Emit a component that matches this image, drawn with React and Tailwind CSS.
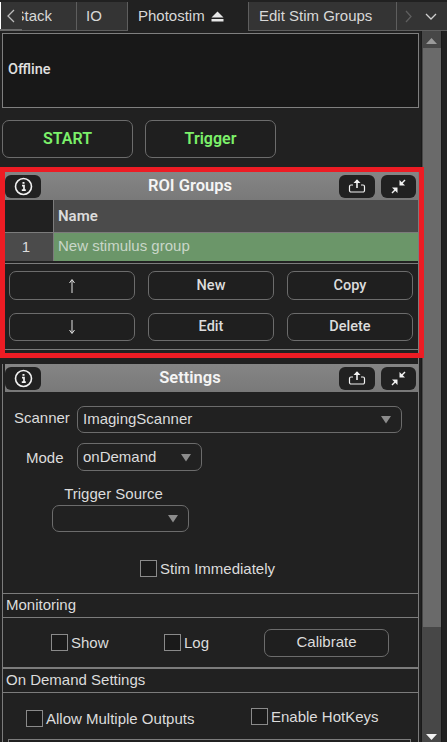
import { useState } from "react";

const sans = "font-['Liberation_Sans',Arial,sans-serif]";
const din = "font-['Roboto',sans-serif] font-medium";
const dinBold = "font-['Roboto',sans-serif] font-semibold";

const PanelHeader = ({ title }) => (
  <div className="flex h-[28px] items-center justify-between bg-gradient-to-b from-[#858585] to-[#797979] pr-[2px]">
    <button className="flex h-[23px] w-[36px] items-center justify-center rounded-[6px] bg-[#212121]">
      <svg width="19" height="19" viewBox="0 0 19 19" fill="none" stroke="#f2f2f2" strokeWidth="1.6">
        <circle cx="9.5" cy="9.5" r="8" />
        <path d="M8 8.6h2v4.6M7.8 13.2h4" strokeWidth="1.7" />
        <path d="M9.5 5v1.8" strokeWidth="2" />
      </svg>
    </button>
    <div className={`${dinBold} flex-1 text-center text-[16.5px] text-[#f5f5f5]`}>{title}</div>
    <div className="flex gap-[6px]">
      <button className="flex h-[23px] w-[36px] items-center justify-center rounded-[6px] bg-[#212121]">
        <svg width="18" height="16" viewBox="0 0 18 16" fill="none" stroke="#f2f2f2" strokeWidth="1.2">
          <path d="M5 7H3a1.5 1.5 0 0 0-1.5 1.5v4A1.5 1.5 0 0 0 3 14h12a1.5 1.5 0 0 0 1.5-1.5v-4A1.5 1.5 0 0 0 15 7h-2" />
          <path d="M9 10V2" strokeWidth="1.6" />
          <path d="M5.5 5L9 1.2 12.500 5z" fill="#f2f2f2" stroke="none" />
        </svg>
      </button>
      <button className="flex h-[23px] w-[35px] items-center justify-center rounded-[6px] bg-[#212121]">
        <svg width="15" height="15" viewBox="0 0 15 15" fill="#f2f2f2" stroke="#f2f2f2">
          <path d="M1 14l4-4" strokeWidth="1.5" />
          <path d="M1 8.500h5.500V14z" stroke="none" />
          <path d="M14 1l-4 4" strokeWidth="1.500" />
          <path d="M8.500 1v5.500H14z" stroke="none" />
        </svg>
      </button>
    </div>
  </div>
);

const Btn = ({ children, className = "" }) => (
  <button className={`flex items-center justify-center rounded-[7px] border border-[#6c6c6c] bg-[#1f1f1f] ${className}`}>
    {children}
  </button>
);

const ActionBtn = ({ children, className = "" }) => (
  <Btn className={`${din} text-[14.5px] text-[#dcdcdc] ${className}`}>{children}</Btn>
);

const GreenBtn = ({ children }) => (
  <Btn className={`${dinBold} h-[38px] w-[131px] text-[16px] text-[#7cf06a]`}>{children}</Btn>
);

const Arrow = ({ up }) => (
  <svg width="8" height="16" viewBox="0 0 8 16" fill="none" stroke="#e4e4e4" strokeWidth="1">
    {up ? <path d="M4 15V2M1.500 5L4 1.500 6.500 5" /> : <path d="M4 1v13M1.500 11L4 14.500 6.500 11" />}
  </svg>
);

const Select = ({ value, className = "" }) => (
  <div className={`flex items-center justify-between rounded-[7px] border border-[#6c6c6c] pl-[5px] pr-[9px] text-[15px] text-[#dcdcdc] ${className}`}>
    <span>{value}</span>
    <svg width="12" height="9" viewBox="0 0 12 9" fill="#8c8c8c">
      <path d="M1 1h10L6 8.500z" />
    </svg>
  </div>
);

const Check = ({ label, className = "" }) => {
  const [on, setOn] = useState(false);
  return (
    <label className={`flex items-center gap-[3px] text-[15px] leading-[17px] text-[#dcdcdc] ${className}`}>
      <input
        type="checkbox"
        checked={on}
        onChange={() => setOn(!on)}
        className="h-[17px] w-[17px] appearance-none border border-[#8a8a8a] bg-[#1a1a1a]"
      />
      {label}
    </label>
  );
};

const SectionTitle = ({ children }) => (
  <div className="flex h-[24px] items-center border-b border-[#7c7c7c] pl-[3px] text-[15px] text-[#dcdcdc]">
    {children}
  </div>
);

export default function App() {
  return (
    <div className={`${sans} relative flex h-[742px] w-[447px] flex-col overflow-hidden bg-[#212121]`}>
      {/* tabs */}
      <div className="relative flex h-[31px] shrink-0 border-t-2 border-[#212121] bg-[#343434] text-[15px] text-[#d8d8d8]">
        <div className="flex w-[77px] items-center border-b border-r border-[#5e5e5e] pl-[22px]">
          <div className="flex w-[30px] justify-end overflow-hidden whitespace-nowrap">Stack</div>
        </div>
        <div className="flex w-[51px] items-center border-b border-r border-[#5e5e5e] pl-[9px]">IO</div>
        <div className="flex w-[120px] items-center gap-[6px] bg-[#212121] pl-[10px]">
          Photostim
          <svg width="13" height="11" viewBox="0 0 13 11" fill="#e8e8e8">
            <path d="M6.500 0.500L12.500 6.500H0.500z" />
            <path d="M0.500 8h12v2.500H0.500z" />
          </svg>
        </div>
        <div className="flex w-[149px] items-center border-b border-r border-l border-[#5e5e5e] pl-[10px]">Edit Stim Groups</div>
        <div className="flex flex-1 items-center gap-[13px] border-b border-[#5e5e5e] pl-[8px]">
          <svg width="7" height="13" viewBox="0 0 7 13" fill="none" stroke="#5f5f5f" strokeWidth="1.300">
            <path d="M1 1l5 5.500L1 12" />
          </svg>
          <svg width="12" height="7" viewBox="0 0 12 7" fill="none" stroke="#cfcfcf" strokeWidth="1.300">
            <path d="M1 1l5 5 5-5" />
          </svg>
        </div>
        <div className="absolute left-0 top-0 flex h-[27px] w-[22px] items-center justify-center bg-[#343434]">
          <svg width="8" height="14" viewBox="0 0 8 14" fill="none" stroke="#bdbdbd" strokeWidth="1.300">
            <path d="M7 1L1 7l6 6" />
          </svg>
        </div>
        <div className="absolute left-0 top-0 h-[27px] w-[1px] bg-white" />
        <div className="absolute bottom-0 left-0 h-[2px] w-[22px] bg-[#6a6a6a]" />
      </div>

      <div className="flex min-h-0 flex-1">
        {/* main column */}
        <div className="ml-[2px] w-[417px] shrink-0">
          <div className="mt-[2px] flex h-[75px] items-center border border-[#7f7f7f] bg-[#181818] pb-[2px] pl-[5px]">
            <span className={`${din} text-[14.5px] text-[#e0e0e0]`}>Offline</span>
          </div>

          <div className="mt-[12px] flex gap-[12px]">
            <GreenBtn>START</GreenBtn>
            <GreenBtn>Trigger</GreenBtn>
          </div>

          {/* ROI Groups */}
          <div className="mt-[14px] border-r border-[#7c7c7c] pl-[3px]">
            <PanelHeader title="ROI Groups" />
            <div className="flex h-[33px] bg-[#4b4b4b]">
              <div className="w-[49px] border-b border-r border-[#7c7c7c] bg-[#212121]" />
              <div className={`${dinBold} flex flex-1 items-center border-b border-[#7c7c7c] pl-[4px] text-[15px] text-[#dcdcdc]`}>Name</div>
            </div>
            <div className="flex h-[28px]">
              <div className="flex w-[49px] items-center justify-center border-r border-[#7c7c7c] bg-[#4b4b4b] pr-[6px] text-[15px] text-[#dcdcdc]">1</div>
              <div className="flex flex-1 items-center bg-[#6b9669] pb-[2px] pl-[4px] text-[15px] text-[#c9d6c8]">New stimulus group</div>
            </div>
            <div className="mt-[2px] grid grid-cols-3 gap-x-[13px] gap-y-[13px] border-t border-[#7c7c7c] pb-[8px] pl-[4px] pr-[5px] pt-[7px]">
              <ActionBtn className="h-[29px]"><Arrow up /></ActionBtn>
              <ActionBtn className="h-[29px]">New</ActionBtn>
              <ActionBtn className="h-[29px]">Copy</ActionBtn>
              <ActionBtn className="h-[28px]"><Arrow /></ActionBtn>
              <ActionBtn className="h-[28px]">Edit</ActionBtn>
              <ActionBtn className="h-[28px]">Delete</ActionBtn>
            </div>
            <div className="h-[15px] border-t border-[#7c7c7c]" />
          </div>

          {/* Settings */}
          <div className="border-x border-[#7c7c7c]">
            <div className="pl-[2px]">
              <PanelHeader title="Settings" />
            </div>
            <div className="flex items-center pt-[14px]">
              <div className="w-[74px] pb-[5px] pl-[11px] text-[15px] leading-[17px] text-[#dcdcdc]">Scanner</div>
              <Select value="ImagingScanner" className="h-[27px] w-[325px]" />
            </div>
            <div className="flex items-center pt-[10px]">
              <div className="w-[74px] pl-[23px] text-[15px] leading-[17px] text-[#dcdcdc]">Mode</div>
              <Select value="onDemand" className="h-[28px] w-[125px]" />
            </div>
            <div className="ml-[49px] w-[137px] pt-[13px]">
              <div className="pr-[14px] text-center text-[15px] leading-[20px] text-[#dcdcdc]">Trigger Source</div>
              <Select value="" className="mt-[1px] h-[27px]" />
            </div>
            <div className="flex justify-center pb-[16px] pr-[6px] pt-[28px]">
              <Check label="Stim Immediately" />
            </div>
            <div className="border-t border-[#7c7c7c]">
              <SectionTitle>Monitoring</SectionTitle>
            </div>
            <div className="flex h-[49px] items-center">
              <Check label="Show" className="ml-[48px] w-[113px]" />
              <Check label="Log" className="w-[100px]" />
              <Btn className="h-[28px] w-[125px] text-[15px] text-[#dcdcdc]">Calibrate</Btn>
            </div>
            <div className="border-t-2 border-[#7c7c7c]">
              <SectionTitle>On Demand Settings</SectionTitle>
            </div>
            <div className="relative h-[60px]">
              <Check label="Allow Multiple Outputs" className="absolute left-[23px] top-[17px]" />
              <Check label="Enable HotKeys" className="absolute left-[248px] top-[15px]" />
              <div className="absolute left-[5px] top-[46px] h-[20px] w-[403px] border border-[#7c7c7c]" />
            </div>
          </div>
        </div>

        {/* scrollbar */}
        <div className="ml-[2px] flex h-full w-[21px] shrink-0 flex-col items-center border-x border-[#1a1a1a] bg-[#474747]">
          <svg className="mt-[7px]" width="11" height="6" viewBox="0 0 11 6" fill="#9a9a9a">
            <path d="M0 6L5.500 0 11 6z" />
          </svg>
          <div className="mt-[4px] h-[579px] w-[18px] bg-[#6a6a6a]" />
          <svg className="mt-auto mb-[2px]" width="11" height="6" viewBox="0 0 11 6" fill="#f2f2f2">
            <path d="M0 0l5.500 6L11 0z" />
          </svg>
        </div>
      </div>

      {/* red highlight around ROI Groups */}
      <div className="pointer-events-none absolute left-0 top-[167px] h-[191px] w-[424px] border-[5px] border-[#ed1c24]" />
    </div>
  );
}
